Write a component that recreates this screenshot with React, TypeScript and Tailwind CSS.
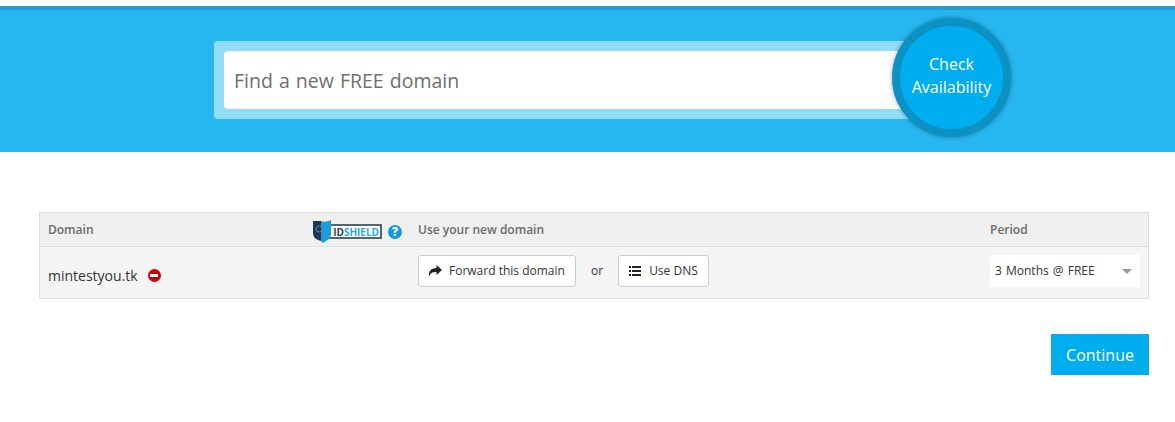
import React from "react";

const font = { fontFamily: '"Open Sans", sans-serif' };

function IdShieldLogo() {
  return (
    <div className="relative flex h-[24px] w-[70px] items-center">
      {/* shield */}
      <svg width="20" height="24" viewBox="0 0 20 24" className="absolute left-0 top-0 z-10">
        <path d="M1 1 L9 1 L9 21 C5 20 1 18 1 13 Z" fill="#1d3557" />
        <path d="M9 1 C12 2 15 2 19 0 L19 14 C19 19 14 21 11 23 L9 21 Z" fill="#1b9ed8" />
        <circle cx="7" cy="9" r="3" fill="none" stroke="#5d7b96" strokeWidth="1.2" />
      </svg>
      <div className="ml-[12px] flex h-[15px] w-[58px] items-center justify-end border-2 border-[#4f6478] bg-white pr-[1px] text-[10px] font-bold leading-none">
        <span className="text-[#2c3e50]">ID</span>
        <span className="text-[#2aa6dc]">SHIELD</span>
      </div>
    </div>
  );
}

export default function App() {
  return (
    <div className="h-[422px] overflow-hidden bg-white pt-[6px] text-[#333]" style={font}>
      {/* search band */}
      <div className="flex h-[146px] justify-center border-t-4 border-[#1e9fd1] bg-[#27b7f0] pt-[31px]">
        <div className="relative h-[78px] w-[747px] rounded-[4px] bg-[#93dcf8] p-[10px]">
          <div className="flex h-[58px] items-center rounded-[4px] bg-white pl-[10px] pt-[2px] text-[19.5px] text-[#6f6f6f] [word-spacing:1px]">
            Find a new FREE domain
          </div>
          <button className="absolute left-[678px] top-[-23px] flex h-[119px] w-[119px] items-center justify-center rounded-full border-[8px] border-[#0c91c4] bg-[#00adef] pb-[3px] text-center text-[16px] leading-[23px] text-white shadow-[0_0_5px_rgba(0,0,0,0.35)]">
            Check
            <br />
            Availability
          </button>
        </div>
      </div>

      {/* domain table */}
      <div className="ml-[39px] mr-[26px] mt-[60px] border border-[#dddddd] bg-[#f5f5f5]">
        <div className="flex h-[34px] items-center border-b border-[#dddddd] bg-[#f0f0f0] pl-[8px] text-[12px] font-semibold text-[#6b6b6b]">
          <div className="w-[264px]">Domain</div>
          <div className="flex w-[106px] items-center pt-[4px]">
            <IdShieldLogo />
            <span className="ml-[6px] flex h-[14px] w-[14px] items-center justify-center rounded-full bg-[#129bdb] text-[12px] font-extrabold leading-none text-white">
              ?
            </span>
          </div>
          <div className="w-[572px]">Use your new domain</div>
          <div>Period</div>
        </div>
        <div className="flex h-[51px] items-start pl-[8px] pt-[8px]">
          <div className="flex h-[32px] w-[370px] items-center pt-[8px] text-[14px] text-[#333]">
            mintestyou.tk
            <span className="ml-[10px] flex h-[13px] w-[13px] items-center justify-center rounded-full bg-[#c9000e]">
              <span className="h-[3px] w-[8px] bg-white" />
            </span>
          </div>
          <div className="flex w-[572px] items-center text-[12px]">
            <button className="flex h-[32px] w-[158px] items-center rounded-[3px] border border-[#cccccc] bg-white pl-[9px] text-[#333]">
              <svg width="14" height="12" viewBox="0 0 14 12" className="mr-[7px]">
                <path d="M8.5 0 L14 5 L8.5 10 V7 C5 7 2.5 7.5 1 11.5 C0.3 6.5 3 3 8.5 3 Z" fill="#222" />
              </svg>
              Forward this domain
            </button>
            <span className="ml-[15px] mr-[15px]">or</span>
            <button className="flex h-[32px] w-[91px] items-center rounded-[3px] border border-[#cccccc] bg-white pl-[10px] text-[#333]">
              <svg width="12" height="10" viewBox="0 0 12 10" className="mr-[8px]">
                <path d="M0 0H2V2H0ZM3 0H12V2H3ZM0 4H2V6H0ZM3 4H12V6H3ZM0 8H2V10H0ZM3 8H12V10H3Z" fill="#222" />
              </svg>
              Use DNS
            </button>
          </div>
          <div className="flex h-[32px] w-[150px] items-center justify-between bg-white pl-[5px] pr-[8px] text-[12px] [word-spacing:1px]">
            3 Months @ FREE
            <span className="h-0 w-0 border-x-[5px] border-t-[5px] border-x-transparent border-t-[#999999]" />
          </div>
        </div>
      </div>

      {/* continue */}
      <div className="mr-[26px] mt-[35px] flex justify-end">
        <button className="h-[41px] w-[98px] bg-[#00adef] text-[16px] text-white">Continue</button>
      </div>
    </div>
  );
}
